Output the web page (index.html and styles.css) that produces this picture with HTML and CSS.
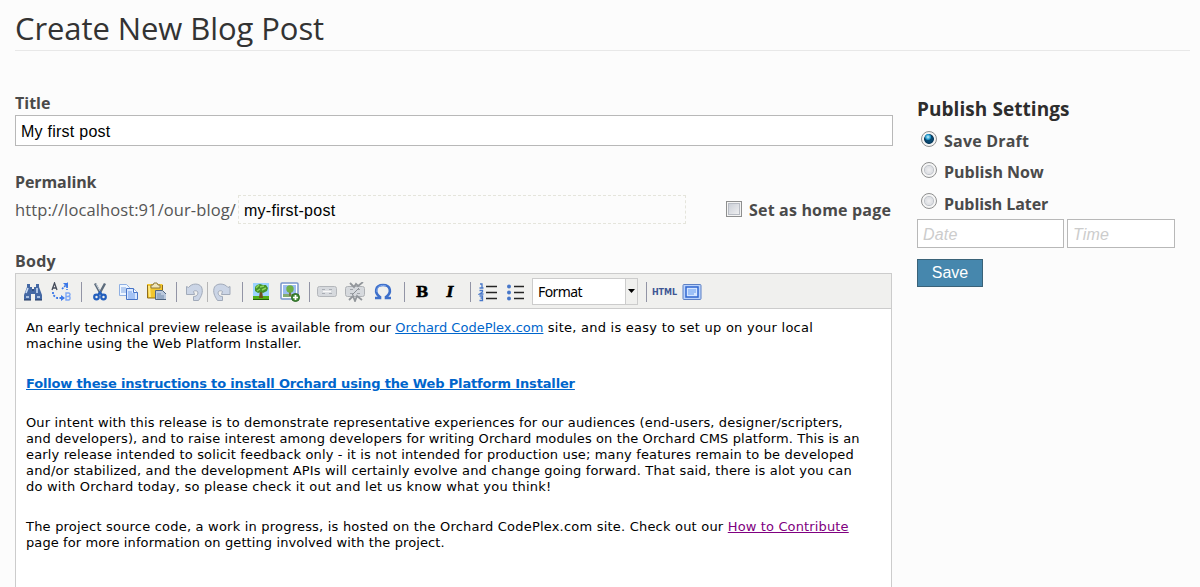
FILE: index.html
```
<!DOCTYPE html>
<html lang="en">
<head>
<meta charset="utf-8">
<title>Create New Blog Post</title>
<link rel="stylesheet" href="styles.css">
</head>
<body>
<header class="page-head"><h1>Create New Blog Post</h1></header>
<div class="columns">
  <main class="primary">
    <section class="field title-field">
      <div class="label">Title</div>
      <div class="textbox">My first post</div>
    </section>
    <section class="field link-field">
      <div class="label tight">Permalink</div>
      <div class="permalink">
        <span class="base">http://localhost:91/our-blog/</span>
        <div class="slug">my-first-post</div>
        <div class="home"><i class="checkbox"></i><span class="home-text">Set as home page</span></div>
      </div>
    </section>
    <section class="field">
      <div class="label loose">Body</div>
      <div class="editor">
        <div class="toolbar">
          <span class="btn"><svg viewBox="0 0 20 20"><path d="M4 2h3v3h2v2h2V5h2V2h3v3l3 8v5h-7v-6H8v6H1v-5l3-8z" fill="#4468a4"/><path d="M3 11l2-5M14 11V6M3 15h3M14 15h3" stroke="#c8dbf5" stroke-width="1.6"/><path d="M1 18h7M12 18h7M9 8h2" stroke="#20365f"/></svg></span>
          <span class="btn"><svg viewBox="0 0 20 20" fill="none"><path d="M1 8l2.500-7L6 8M2 6h3.400" stroke="#454c5b" stroke-width="1.300"/><path d="M15 11h3l1 1v1l-1 1 1 1v2l-1 1h-3zM15 14.500h3" stroke="#7fa8f5" stroke-width="1.400"/><path d="M2 10v3l4 3h4" stroke="#3b78e8" stroke-width="1.800" stroke-dasharray="2 1.500"/><path d="M11 7l5-5v6" stroke="#3b78e8" stroke-width="1.600" stroke-dasharray="2 1"/><path d="M10 13l4 3-4 3zM12 1h5v5z" fill="#3b78e8"/></svg></span>
          <i class="sep"></i>
          <span class="btn"><svg viewBox="0 0 20 20" fill="none"><path d="M5 1.500l6 11M15 1.500l-6 11" stroke="#5d6c7c" stroke-width="2.400"/><path d="M6 2l5 9" stroke="#c5cfda"/><circle cx="6.500" cy="15" r="2.300" stroke="#235fbd" stroke-width="2.200"/><circle cx="13.500" cy="15" r="2.300" stroke="#235fbd" stroke-width="2.200"/><path d="M8 13l2-3 2 3" stroke="#235fbd" stroke-width="2"/></svg></span>
          <span class="btn"><svg viewBox="0 0 20 20"><path d="M1.500 2.500h7l3 3v8h-10z" fill="#eff6ff" stroke="#8fb0e3"/><path d="M3 6h5M3 8h5M3 10h5" stroke="#7ea6e4"/><path d="M8.500 6.500h7l4 4v7h-11z" fill="#d9e8ff" stroke="#4774c7"/><path d="M15.500 6.500v4h4" fill="#fff" stroke="#4774c7"/><path d="M10 10h4M10 12h7M10 14h7M10 16h7" stroke="#6f9cea"/></svg></span>
          <span class="btn"><svg viewBox="0 0 20 20"><path d="M1 2h15l1 1v13H1z" fill="#f2c62e"/><path d="M1.500 3v13h8M16.500 3v5" fill="none" stroke="#8f6c1a"/><path d="M3 4l1 11" stroke="#ffe984" stroke-width="2"/><path d="M5 3h2l1-2h3l1 2h2v3H5z" fill="#efe5ba" stroke="#8c783f"/><path d="M9.500 8.500h7l4 4v5h-11z" fill="#b9c8dc" stroke="#4f6582"/><path d="M11 12h4M11 14h7M11 16h7" stroke="#738cae"/></svg></span>
          <i class="sep s10"></i>
          <span class="btn ruled"><svg viewBox="0 0 20 20"><path d="M2.500 4.500l2 1C8 1 15 1 17.500 5c2 5 0 9-3 13.500h-5v-4c4 0 5-3 4-5-1-1-3-1-4 0l1 3h-8z" fill="#cbd5e6" stroke="#a1aab9"/></svg></span>
          <span class="btn"><svg viewBox="0 0 20 20"><path d="M18 4.500l-2 1C12.500 1 5 1 2.500 5c-2 5 0 9 3 13.500h5v-4c-4 0-5-3-4-5 1-1 3-1 4 0l-1 3H18z" fill="#cbd5e6" stroke="#a1aab9"/></svg></span>
          <i class="sep"></i>
          <span class="btn"><svg viewBox="0 0 20 20"><path d="M2 1h16v17H2z" fill="#9bd2ff"/><path d="M2 14h16v4H2z" fill="#51ae18"/><path d="M2 17.500h16" stroke="#245e0a"/><path d="M9 8h2l1 8H8z" fill="#70501d"/><path d="M4 5l2-2 3-1 3 1 3 0 2 3-1 3-4 2-2-1-3 1-3-2z" fill="#43912a"/><path d="M5 6l3-3M9 5l4-1M11 8l4-2M6 9l3-2" stroke="#8cd65b" stroke-width="1.500"/></svg></span>
          <span class="btn w30"><svg viewBox="0 0 20 20"><rect x="1" y="1" width="17" height="16" rx="1" fill="#fff" stroke="#7895cb" stroke-width="1.500"/><path d="M3 3h13v12H3z" fill="#9bbcf0"/><path d="M3 12h13v3H3z" fill="#83ab72"/><path d="M9 9h2v5H9z" fill="#796e48"/><circle cx="10" cy="7" r="3.700" fill="#6eb045"/><circle cx="15.500" cy="15.500" r="4" fill="#438a36" stroke="#2d6927"/><path d="M13 15.500h5M15.500 13v5" stroke="#fff" stroke-width="1.700"/></svg></span>
          <i class="sep s8"></i>
          <span class="btn"><svg viewBox="0 0 20 20" fill="none"><rect x=".5" y="4.500" width="19" height="10" rx="2" fill="#d6d9dd" stroke="#b4b7bb"/><path d="M5 7.500h3M12 7.500h3M5 11.500h3M12 11.500h3" stroke="#a9adb4"/><path d="M6 9.500h8" stroke="#f8f8f8" stroke-width="1.500"/></svg></span>
          <span class="btn"><svg viewBox="0 0 20 20" fill="none"><rect x=".5" y="4.500" width="19" height="10" rx="2" fill="#d6d9dd" stroke="#aeb1b5"/><path d="M5 7.500h3M12 7.500h3M5 11.500h3M12 11.500h3" stroke="#a0a4aa"/><path d="M5 1l4 4 2-3 2 2 5-4M4 18l4-4 2 5 2-5 5 4" stroke="#92969b" stroke-width="1.800"/><path d="M7 13l7-7" stroke="#8a8e93"/></svg></span>
          <span class="btn"><svg viewBox="0 0 20 20" fill="none"><path d="M2 16h5v-1C1 11 2 3 10 3s9 8 3 12v1h5" stroke="#3e70ca" stroke-width="2.600"/><path d="M4 10C3 5 8 2 13 4" stroke="#83aaf0"/></svg></span>
          <i class="sep s12"></i>
          <span class="btn bold">B</span>
          <span class="btn italic">I</span>
          <i class="sep s9"></i>
          <span class="btn"><svg viewBox="0 0 20 20" fill="none"><path d="M8 4.500h11M8 10.500h11M8 16.500h11" stroke="#252525" stroke-width="1.500"/><path d="M2 2h2v4M1.500 6h4M1.500 8.500h3V10l-3 2h4M1.500 14h3v2h-2 2v2.500h-3" stroke="#4777c9" stroke-width="1.300"/></svg></span>
          <span class="btn"><svg viewBox="0 0 20 20"><path d="M8 4.500h10M8 10.500h10M8 16.500h10" stroke="#252525" stroke-width="1.500"/><g fill="#4777c9"><circle cx="3" cy="4.500" r="2"/><circle cx="3" cy="10.500" r="2"/><circle cx="3" cy="16.500" r="2"/></g></svg></span>
          <div class="select"><span>Format</span><b><svg viewBox="0 0 7 4"><path d="M0 0h7L3.500 4z"/></svg></b></div>
          <i class="sep s10"></i>
          <span class="btn html">HTML</span>
          <span class="btn"><svg viewBox="0 0 20 20"><rect x="1" y="2.500" width="18" height="15" rx="1" fill="#b9d2fb" stroke="#5c80c5"/><rect x="4" y="5" width="12" height="10" fill="#d5e6ff" stroke="#2f66cf" stroke-width="1.500"/><path d="M6 8h8M6 10h8M6 12h6" stroke="#659aef" stroke-width="1.200"/></svg></span>
        </div>
        <div class="content">
          <p><span class="k07">An early technical preview release is available from our </span><a>Orchard CodePlex.com</a><span class="k24"> site, and is easy to set up on your local</span><br><span class="k10">machine using the Web Platform Installer.</span></p>
          <p class="strong"><a>Follow these instructions to install Orchard using the Web Platform Installer</a></p>
          <p><span class="k14">Our intent with this release is to demonstrate representative experiences for our audiences (end-users, designer/scripters,</span><br><span class="k10">and developers), and to raise interest among developers for writing Orchard modules on the Orchard CMS platform. This is an</span><br><span class="k15">early release intended to solicit feedback only - it is not intended for production use; many features remain to be developed</span><br><span class="k16">and/or stabilized, and the development APIs will certainly evolve and change going forward. That said, there is alot you can</span><br><span class="k22">do with Orchard today, so please check it out and let us know what you think!</span></p>
          <p><span class="k20">The project source code, a work in progress, is hosted on the Orchard CodePlex.com site. Check out our </span><a class="visited k14">How to Contribute</a><br><span class="k10">page for more information on getting involved with the project.</span></p>
        </div>
      </div>
    </section>
  </main>
  <aside class="publish">
    <h2>Publish Settings</h2>
    <div class="option k20"><i class="radio on"></i><span>Save Draft</span></div>
    <div class="option"><i class="radio"></i><span>Publish Now</span></div>
    <div class="option last"><i class="radio"></i><span>Publish Later</span></div>
    <div class="when"><div class="date">Date</div><div class="time">Time</div></div>
    <div class="save">Save</div>
  </aside>
</div>
</body>
</html>
```
FILE: styles.css
```
* { box-sizing: border-box; }
html, body { height: 100%; }
body { margin: 0; padding: 0 10px 0 15px; background: #fcfcfc; color: #4a4a4a; font: 16px "Open Sans", "Noto Sans", sans-serif; overflow: hidden; white-space: nowrap; }
.page-head { height: 51px; border-bottom: 1px solid #e8e8e8; }
h1 { margin: 0; padding-top: 7px; color: #333; font-size: 31px; font-weight: 400; line-height: 43px; letter-spacing: -.08px; }
.columns { display: flex; gap: 24px; }
.primary { width: 878px; padding-top: 41px; }
.label { height: 23px; line-height: 22px; font-weight: 700; }
.tight { letter-spacing: -.1px; }
.loose { letter-spacing: .25px; }
.textbox { height: 31px; padding: 0 5px; border: 1px solid #b8b8b8; background: #fff; color: #000; font: 16px/31px "Liberation Sans", Arial, sans-serif; letter-spacing: .25px; }
.title-field { height: 79px; }
.link-field { height: 79px; }
.permalink { display: flex; align-items: center; height: 31px; }
.base { width: 223px; line-height: 30px; color: #555; font-size: 16.500px; letter-spacing: .1px; }
.slug { width: 448px; height: 29px; padding-left: 5px; border: 1px dashed #e5e5dc; color: #000; font: 16px/29px "Liberation Sans", Arial, sans-serif; letter-spacing: .26px; }
.home { display: flex; align-items: center; gap: 7px; margin-left: 40px; font-weight: 700; letter-spacing: .18px; }
.checkbox { width: 16px; height: 16px; margin-top: -2px; border: 1px solid #8e8f8f; background: linear-gradient(135deg, #c5cad3, #f5f5f5); box-shadow: inset 0 0 0 1px #f4f4f4, inset 0 0 0 2px #b8bcc4; }
.editor { width: 877px; height: 330px; border: 1px solid #ccc; background: #fff; }
.toolbar { display: flex; align-items: center; height: 35px; padding: 2px 0 0 3px; border-bottom: 1px solid #ccc; background: #f0f0ee; }
.btn { display: flex; flex: none; align-items: center; justify-content: center; width: 28px; height: 20px; }
.btn svg { width: 20px; height: 20px; }
.btn.w30 { width: 30px; }
.ruled { border-right: 1px solid #b5b5b5; }
.sep { flex: none; width: 11px; height: 20px; background: linear-gradient(#9294a5, #9294a5) 6px 0 / 1px 20px no-repeat; }
.s8 { width: 8px; background-position-x: 4px; }
.s9 { width: 9px; background-position-x: 5px; }
.s10 { width: 10px; }
.s12 { width: 12px; background-position-x: 7px; }
.bold, .italic { padding-right: 2px; color: #000; font: bold 15px "DejaVu Serif", serif; -webkit-text-stroke: .4px #000; }
.italic { font-style: italic; }
.html { padding-left: 1px; color: #3f5794; font: bold 8px "DejaVu Sans", sans-serif; }
.select { display: flex; width: 106px; height: 27px; margin: -2px 2px 0; border: 1px solid #ccc; background: #fff; color: #000; font: 14px/25px "Noto Sans", sans-serif; letter-spacing: -.6px; }
.select span { flex: 1; padding-left: 5px; }
.select b { display: flex; align-items: center; justify-content: center; width: 12px; border-left: 1px solid #ccc; background: #f0f0ee; }
.select svg { width: 7px; height: 4px; }
.content { padding: 11px 10px; color: #000; font: 13px/16px "DejaVu Sans", Verdana, sans-serif; }
.content p { margin: 0 0 24px; }
.content p.strong { margin-bottom: 23px; font-weight: 700; letter-spacing: -.158px; }
.content a { color: #06c; text-decoration: underline; }
.content a.visited { color: #800080; }
.k07 { letter-spacing: .065px; }
.k10 { letter-spacing: .104px; }
.k14 { letter-spacing: .14px; }
.k15 { letter-spacing: .148px; }
.k16 { letter-spacing: .16px; }
.k20 { letter-spacing: .205px; }
.k22 { letter-spacing: .22px; }
.k24 { letter-spacing: .245px; }
.publish { padding-top: 42px; font-weight: 700; }
h2 { margin: 0; height: 32px; color: #2d2d2d; font-size: 19px; line-height: 32px; letter-spacing: .06px; }
.option { display: flex; align-items: flex-start; height: 31px; padding-left: 4px; gap: 7px; line-height: 33px; }
.option.last { height: 32px; line-height: 34px; letter-spacing: -.1px; }
.radio { width: 16px; height: 16px; margin-top: 6px; border: 1px solid #8e8f8f; border-radius: 50%; background: radial-gradient(circle at 7px 7px, #f0f0f2, #dcdee2 4px, #c0c4ca 4.500px, #f5f5f5 5.500px); }
.radio.on { background: radial-gradient(circle at 6px 5px, #c5f4ff 0, #2297cb 2.500px, transparent 3.500px), radial-gradient(circle at 7px 7px, #0a4a72 3px, #073a5d 4.500px, #f4f4f4 5.300px); }
.when { display: flex; gap: 3px; }
.date, .time { width: 147px; height: 29px; padding-left: 5px; border: 1px solid #b8b8b8; background: #fff; color: #ccc; font: italic 16px/29px "Liberation Sans", Arial, sans-serif; letter-spacing: .2px; }
.time { width: 108px; }
.save { width: 66px; height: 28px; margin-top: 11px; border: 1px solid #3a6278; background: #4687ad; color: #fff; text-align: center; font: 16px/26px "Liberation Sans", Arial, sans-serif; }
```
